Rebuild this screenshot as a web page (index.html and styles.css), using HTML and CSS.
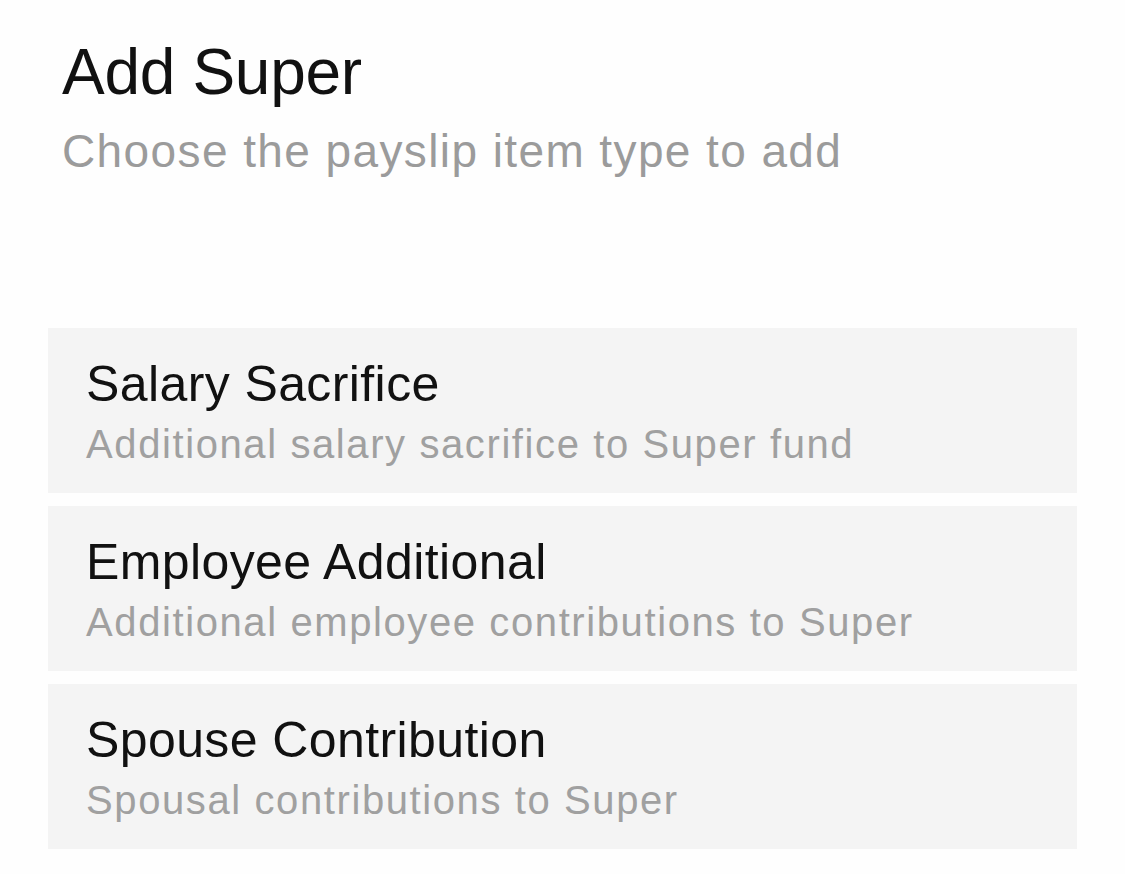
FILE: index.html
```html
<!DOCTYPE html>
<html lang="en">

<head>
    <meta charset="UTF-8">
    <meta name="viewport" content="width=device-width, initial-scale=1.0">
    <title>Add Super</title>
    <link rel="stylesheet" href="styles.css">
</head>

<body>
    <div class="header">
        <h1 class="title">Add Super</h1>
        <p class="subtitle">Choose the payslip item type to add</p>
    </div>

    <div class="item-list">
        <div class="item">
            <div class="item-title">Salary Sacrifice</div>
            <div class="item-desc">Additional salary sacrifice to Super fund</div>
        </div>
        <div class="item">
            <div class="item-title">Employee Additional</div>
            <div class="item-desc">Additional employee contributions to Super</div>
        </div>
        <div class="item">
            <div class="item-title">Spouse Contribution</div>
            <div class="item-desc">Spousal contributions to Super</div>
        </div>
    </div>
</body>

</html>
```
FILE: styles.css
```css
html,
body {
    margin: 0;
    padding: 0;
}

body {
    font-family: "Liberation Sans", Arial, sans-serif;
    background-color: #fefefe;
    color: #111;
}

.header {
    padding: 34px 62px 0 62px;
}

.title {
    margin: 0;
    font-size: 64px;
    line-height: 76px;
    font-weight: normal;
    letter-spacing: -0.3px;
    color: #111;
}

.subtitle {
    margin: 14px 0 0 0;
    font-size: 46px;
    line-height: 54px;
    letter-spacing: 1.4px;
    color: #9b9b9b;
}

.item-list {
    display: flex;
    flex-direction: column;
    gap: 13px;
    margin: 150px 48px 0 48px;
}

.item {
    background-color: #f4f4f4;
    padding: 26px 38px 27px 38px;
}

.item-title {
    font-size: 50px;
    line-height: 60px;
    letter-spacing: 0.4px;
    color: #111;
}

.item-desc {
    margin-top: 8px;
    font-size: 40px;
    line-height: 44px;
    letter-spacing: 1.6px;
    color: #a0a0a0;
}
```
